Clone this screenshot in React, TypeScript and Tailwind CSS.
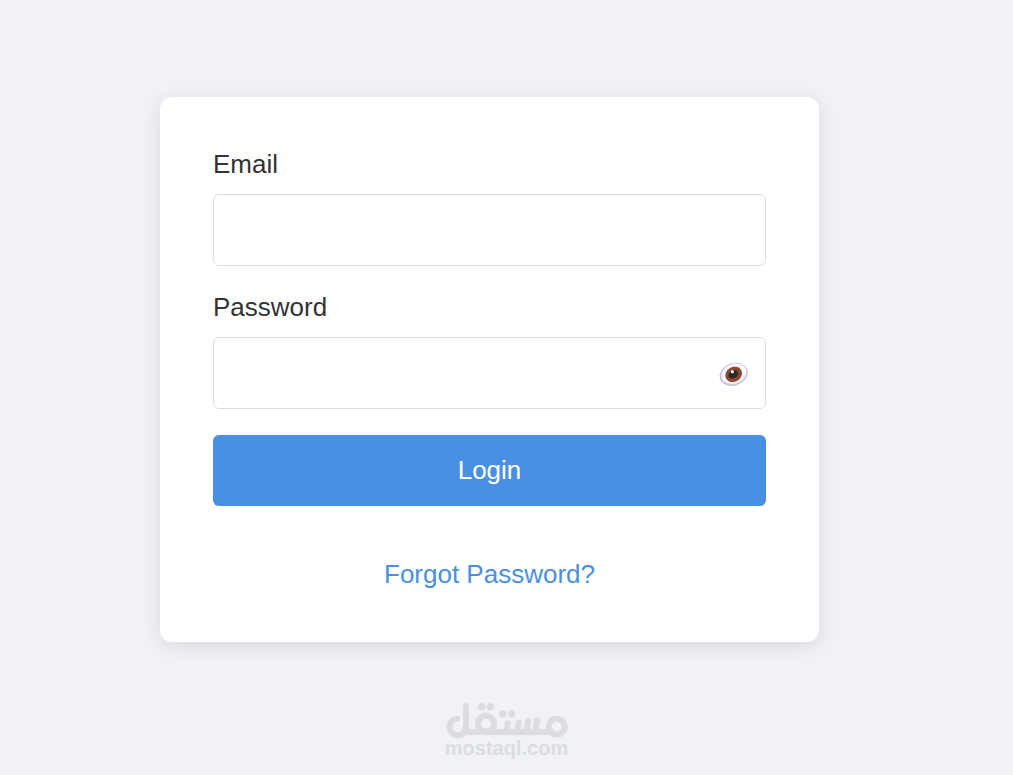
import { useState } from 'react';

const EyeIcon = () => (
    <svg viewBox="0 0 90 72" className="h-6 w-[30px]" aria-hidden="true">
        <g transform="rotate(-20 44 37)">
            <ellipse cx="44" cy="37" rx="42" ry="32" fill="#d9dbe2" stroke="#a5a3d6" strokeWidth="2" />
            <ellipse cx="46" cy="35" rx="38" ry="29" fill="#f9f8fc" />
        </g>
        <ellipse cx="44" cy="37" rx="26" ry="22" fill="#8b4a2f" transform="rotate(-30 44 37)" />
        <ellipse cx="43" cy="37" rx="15" ry="12" fill="#2b2627" transform="rotate(-30 43 37)" />
        <circle cx="40" cy="29" r="5" fill="#ffffff" />
    </svg>
);

const MostaqlLogo = () => (
    <svg viewBox="44 36 369 111" className="h-[37px] w-[123px]" fill="none" stroke="#dcdde0" strokeWidth="18" strokeLinecap="round" aria-hidden="true">
        <path d="M80 86A25 25 0 1 0 107 111V48" />
        <path d="M107 126H352" />
        <circle cx="167" cy="101" r="24" />
        <path d="M232 100L228 126" />
        <path d="M265 98L261 126" />
        <path d="M293 94L289 126" />
        <path d="M320 90L315 126" />
        <circle cx="379" cy="110" r="24" />
        <g fill="#dcdde0" stroke="none">
            <circle cx="154" cy="50" r="11" />
            <circle cx="180" cy="50" r="11" />
            <circle cx="217" cy="72" r="11" />
            <circle cx="243" cy="72" r="11" />
        </g>
    </svg>
);

const inputStyles = 'block h-[72px] w-full rounded-md border border-[#dddddd] bg-white px-4 outline-none focus:border-[#4a90e2]';

const App: React.FC = () => {
    const [email, setEmail] = useState('');
    const [password, setPassword] = useState('');
    const [showPassword, setShowPassword] = useState(false);

    return (
        <div className="flex min-h-screen flex-col items-center bg-[#f0f2f6] pt-[97px] font-['Liberation_Sans',Arial,sans-serif] text-[26px] leading-7 text-[#333333]">
            <main className="flex w-full justify-center pr-[34px]">
                <form
                    onSubmit={(e) => e.preventDefault()}
                    className="w-full max-w-[659px] rounded-xl bg-white px-[53px] pt-[53px] pb-[54px] shadow-[0_4px_20px_rgba(0,0,0,0.1)]"
                >
                    <div className="mb-[27px]">
                        <label htmlFor="email" className="mb-4 block">Email</label>
                        <input
                            id="email"
                            type="email"
                            value={email}
                            onChange={(e) => setEmail(e.target.value)}
                            className={inputStyles}
                        />
                    </div>
                    <div className="mb-[26px]">
                        <label htmlFor="password" className="mb-4 block">Password</label>
                        <div className="relative">
                            <input
                                id="password"
                                type={showPassword ? 'text' : 'password'}
                                value={password}
                                onChange={(e) => setPassword(e.target.value)}
                                className={inputStyles}
                            />
                            <button
                                type="button"
                                aria-label="Toggle password visibility"
                                onClick={() => setShowPassword(!showPassword)}
                                className="absolute inset-y-0 right-[17px] flex cursor-pointer items-center pt-0.5"
                            >
                                <EyeIcon />
                            </button>
                        </div>
                    </div>
                    <button type="submit" className="h-[71px] w-full cursor-pointer rounded-md bg-[#4a90e2] pb-0.5 text-white">
                        Login
                    </button>
                    <div className="mt-[54px] text-center">
                        <a href="#" className="block text-[#4a90e2]">Forgot Password?</a>
                    </div>
                </form>
            </main>
            <footer className="mt-[60px] flex w-full flex-col items-center text-xl leading-[18px] font-bold text-[#dcdde0]">
                <MostaqlLogo />
                <span>mostaql.com</span>
            </footer>
        </div>
    );
};

export default App;
